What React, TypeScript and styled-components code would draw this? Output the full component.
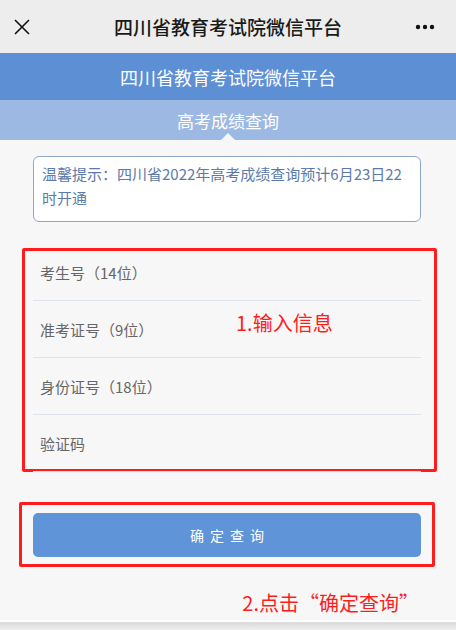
import * as React from "react"
import styled, { createGlobalStyle } from 'styled-components'

const GlobalStyle = createGlobalStyle`
    html, body {
        margin: 0;
        padding: 0;
        background: #f7f7f7;
        font-family: "Noto Sans CJK SC", "Noto Sans", sans-serif;
    }
`

const Page = styled.div`
    width: 456px;
    height: 630px;
    display: flex;
    flex-direction: column;
    overflow: hidden;
    background: #f7f7f7;
`

const NavBar = styled.div`
    height: 53px;
    flex: none;
    display: grid;
    grid-template-columns: 60px 1fr 60px;
    align-items: center;
    background: #ededed;
`

const NavTitle = styled.div`
    text-align: center;
    font-size: 19px;
    font-weight: 500;
    color: #1a1a1a;
`

const NavIcon = styled.div<{ right?: boolean }>`
    display: flex;
    justify-content: ${({ right }) => right ? 'flex-end' : 'flex-start'};
    padding: ${({ right }) => right ? '0 21px 0 0' : '0 0 0 14px'};
`

const Header = styled.div`
    height: 47px;
    flex: none;
    display: flex;
    align-items: center;
    justify-content: center;
    background: #5d8fd5;
    color: #fff;
    font-size: 18px;
`

const SubHeader = styled.div`
    height: 40px;
    flex: none;
    position: relative;
    display: flex;
    align-items: center;
    justify-content: center;
    background: #9cb9e4;
    color: #fff;
    font-size: 17px;

    &::after {
        content: '';
        position: absolute;
        bottom: 0;
        left: 50%;
        margin-left: -7px;
        border: 7px solid transparent;
        border-bottom-color: #f7f7f7;
        border-top-width: 0;
    }
`

const Content = styled.div`
    flex: 1;
    display: flex;
    flex-direction: column;
`

const Notice = styled.div`
    margin: 16px 35px 0 33px;
    height: 66px;
    box-sizing: border-box;
    padding: 5px 16px 0 8px;
    background: #fff;
    border: 1px solid #8ea7cb;
    border-radius: 6px;
    color: #5c7aa8;
    font-size: 15px;
    line-height: 24px;
`

const Annotation = styled.div`
    position: relative;
    border: 3px solid #ff1c1c;
    border-radius: 2px;
`

const FormBox = styled(Annotation)`
    margin: 26px 19px 0 22px;
    height: 224px;
    box-sizing: border-box;
`

const Row = styled.div`
    height: 57px;
    box-sizing: border-box;
    margin: 0 13px 0 8px;
    padding-left: 7px;
    display: flex;
    align-items: center;
    border-bottom: 1px solid #dfe3ea;
    color: #666;
    font-size: 15px;

    &:first-child {
        height: 50px;
        padding-bottom: 6px;
    }

    &:last-child {
        height: 52px;
        border-bottom: none;
    }
`

const Note = styled.div`
    position: absolute;
    left: 211px;
    top: 57px;
    color: #ff1c1c;
    font-size: 20px;
`

const ButtonBox = styled(Annotation)`
    margin: 30px 21px 0 19px;
    height: 65px;
    box-sizing: border-box;
    padding: 8px 11px 0 11px;
`

const QueryButton = styled.button`
    width: 100%;
    height: 44px;
    border: none;
    border-radius: 5px;
    background: #6094d8;
    color: #fff;
    font-family: inherit;
    font-size: 14px;
    letter-spacing: 6px;
    text-indent: 6px;
`

const BottomNote = styled.div`
    margin-top: 24px;
    padding-right: 37px;
    text-align: right;
    color: #ff1c1c;
    font-size: 20px;
    line-height: 24px;
`

const BottomBar = styled.div`
    margin-top: auto;
    height: 8px;
    flex: none;
    border-top: 2px solid #fff;
    background: linear-gradient(#d9d9d9, #efefef);
`

const CloseIcon = () => (
    <svg width="16" height="16" viewBox="0 0 16 16">
        <path d="M1 1L15 15M15 1L1 15" stroke="#111" strokeWidth="1.6" />
    </svg>
)

const MoreIcon = () => (
    <svg width="20" height="6" viewBox="0 0 20 6">
        <circle cx="3" cy="3" r="2.2" fill="#111" />
        <circle cx="10" cy="3" r="2.2" fill="#111" />
        <circle cx="17" cy="3" r="2.2" fill="#111" />
    </svg>
)

export default function App() {
    const fields = ['考生号（14位）', '准考证号（9位）', '身份证号（18位）', '验证码']

    return (
        <Page>
            <GlobalStyle />
            <NavBar>
                <NavIcon><CloseIcon /></NavIcon>
                <NavTitle>四川省教育考试院微信平台</NavTitle>
                <NavIcon right><MoreIcon /></NavIcon>
            </NavBar>
            <Header>四川省教育考试院微信平台</Header>
            <SubHeader>高考成绩查询</SubHeader>
            <Content>
                <Notice>温馨提示：四川省2022年高考成绩查询预计6月23日22时开通</Notice>
                <FormBox>
                    {fields.map(f => <Row key={f}>{f}</Row>)}
                    <Note>1.输入信息</Note>
                </FormBox>
                <ButtonBox>
                    <QueryButton>确定查询</QueryButton>
                </ButtonBox>
                <BottomNote>2.点击“确定查询”</BottomNote>
                <BottomBar />
            </Content>
        </Page>
    )
}
